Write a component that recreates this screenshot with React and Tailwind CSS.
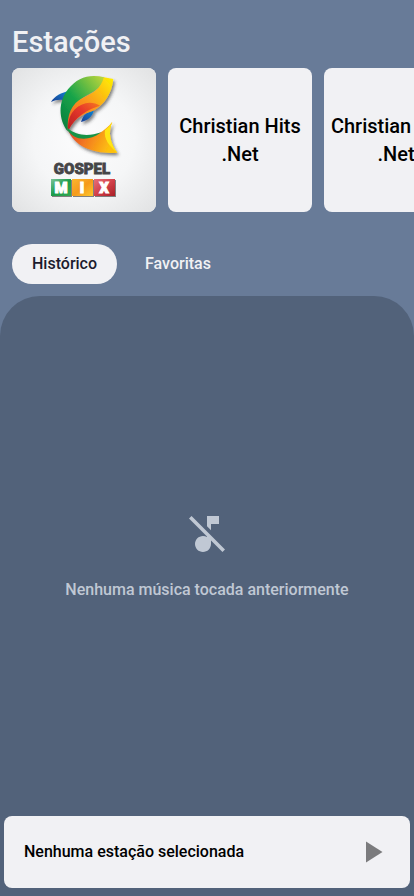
import { MdMusicOff, MdPlayArrow } from "react-icons/md";

function GospelMixLogo() {
  return (
    <svg viewBox="0 0 144 144" className="h-full w-full" role="img" aria-label="Gospel Mix">
      <defs>
        <radialGradient id="paper" cx=".5" cy=".5" r=".7">
          <stop offset="0" stopColor="#fcfcfd" />
          <stop offset=".5" stopColor="#f5f6f7" />
          <stop offset="1" stopColor="#e1e2e3" />
        </radialGradient>
        <linearGradient id="green" x1="0" y1="1" x2="1" y2="0">
          <stop offset="0" stopColor="#087a3d" />
          <stop offset=".45" stopColor="#17a44a" />
          <stop offset="1" stopColor="#c4d83a" />
        </linearGradient>
        <linearGradient id="gold" x1="0" y1="1" x2="1" y2="0">
          <stop offset="0" stopColor="#ef5a23" />
          <stop offset=".5" stopColor="#fa9a1e" />
          <stop offset="1" stopColor="#fff200" />
        </linearGradient>
        <linearGradient id="red" x1="0" y1="1" x2="1" y2="0">
          <stop offset="0" stopColor="#b51d22" />
          <stop offset=".6" stopColor="#e8392b" />
          <stop offset="1" stopColor="#f47a20" />
        </linearGradient>
        <linearGradient id="blue" x1="0" y1="1" x2="1" y2="0">
          <stop offset="0" stopColor="#1b3f94" />
          <stop offset="1" stopColor="#0d86d3" />
        </linearGradient>
        <linearGradient id="tail" x1="0" y1="0" x2="1" y2=".3">
          <stop offset="0" stopColor="#d8342a" />
          <stop offset=".5" stopColor="#f37a20" />
          <stop offset="1" stopColor="#fdc010" />
        </linearGradient>
        <linearGradient id="tileGreen" x1="0" y1="0" x2="1" y2="1">
          <stop offset="0" stopColor="#7cc49a" />
          <stop offset=".5" stopColor="#1c9c4b" />
          <stop offset="1" stopColor="#35a852" />
        </linearGradient>
        <linearGradient id="tileGold" x1="0" y1="0" x2="1" y2="1">
          <stop offset="0" stopColor="#fbb62f" />
          <stop offset=".5" stopColor="#f59a1d" />
          <stop offset="1" stopColor="#fdc72c" />
        </linearGradient>
        <linearGradient id="tileRed" x1="0" y1="0" x2="1" y2="1">
          <stop offset="0" stopColor="#e8707a" />
          <stop offset=".5" stopColor="#d2414a" />
          <stop offset="1" stopColor="#a91f26" />
        </linearGradient>
        <filter id="shade" x="-20%" y="-20%" width="150%" height="150%">
          <feDropShadow dx="5" dy="7" stdDeviation="5" floodColor="#333" floodOpacity=".6" />
        </filter>
        <filter id="tileShade" x="-10%" y="-10%" width="130%" height="140%">
          <feDropShadow dx="1" dy="1" stdDeviation=".7" floodColor="#333" floodOpacity=".6" />
        </filter>
      </defs>
      <rect width="144" height="144" fill="url(#paper)" />
      <g transform="translate(28 -2) scale(.3333)" filter="url(#shade)">
        <path fill="url(#blue)" d="M33 108C44 90 63 79 90 75L68 102C56 100 45 103 33 108Z" />
        <path fill="url(#blue)" d="M123 168C126 157 132 147 140 142L162 133C157 151 145 164 123 168Z" />
        <path fill="url(#green)" d="M83 196C55 160 54 108 84 70C113 33 150 23 193 34C182 75 151 78 121 101C92 123 86 154 83 196Z" />
        <path fill="url(#gold)" d="M192 34L220 39C216 82 193 117 160 134C125 145 98 160 84 196C79 145 96 112 128 96C161 80 181 70 192 34Z" />
        <path fill="url(#red)" d="M84 196C81 150 102 122 137 112C151 108 169 112 180 119C146 130 106 148 84 196Z" />
        <path fill="url(#tail)" d="M83 190C112 228 176 220 217 167C203 200 211 232 232 260C169 265 105 247 83 190Z" />
        <path fill="#ffe512" d="M217 167C203 200 211 232 232 260C207 240 191 219 195 192C204 185 211 176 217 167Z" />
        <path fill="#159447" d="M83 186C110 211 148 211 184 199C143 229 102 222 83 193Z" />
      </g>
      <text x="70" y="106" textAnchor="middle" className="font-['Roboto'] text-[15px] font-black" fill="#454547" stroke="#454547" strokeWidth=".8">GOSPEL</text>
      <g filter="url(#tileShade)">
        <rect x="39" y="111" width="20" height="17" fill="url(#tileGreen)" />
        <rect x="60" y="111" width="21" height="17" fill="url(#tileGold)" />
        <rect x="82" y="111" width="21" height="17" fill="url(#tileRed)" />
      </g>
      <g fill="#fff" stroke="#fff" strokeWidth="1" textAnchor="middle" className="font-['Roboto'] text-[15px] font-black">
        <text x="49" y="125">M</text>
        <text x="70" y="125">I</text>
        <text x="92" y="125">X</text>
      </g>
    </svg>
  );
}

const stations = [
  { id: "gospel-mix", logo: true },
  { id: "christian-hits", name: "Christian Hits .Net" },
  { id: "christian-rock", name: "Christian Rock .Net" },
];

export default function App() {
  return (
    <div className="flex min-h-screen flex-col overflow-hidden bg-[#687b98] font-[Roboto,sans-serif] font-medium">
      <header className="px-3 pt-6">
        <h1 className="text-[29px] leading-9 font-medium text-[#f1f1f4]">Estações</h1>
      </header>
      <div className="mt-2 flex gap-3 overflow-x-auto pl-3 [scrollbar-width:none]">
        {stations.map((s) => (
          <button key={s.id} type="button" className="size-36 shrink-0 overflow-hidden rounded-lg bg-[#f1f1f4] text-center text-xl leading-7 text-black">
            {s.logo ? <GospelMixLogo /> : <span className="block px-1">{s.name}</span>}
          </button>
        ))}
      </div>
      <nav className="mt-8 flex gap-2 px-3">
        <button type="button" className="h-10 rounded-full bg-[#f1f1f4] px-5 text-base text-[#1c1b2e]">Histórico</button>
        <button type="button" className="h-10 rounded-full px-5 text-base text-[#f1f1f4]">Favoritas</button>
      </nav>
      <main className="mt-3 flex grow flex-col rounded-t-[40px] bg-[#52627a]">
        <section className="flex grow flex-col items-center justify-center gap-5 text-[#c0c8d4]">
          <MdMusicOff className="size-12" />
          <p className="text-base leading-6">Nenhuma música tocada anteriormente</p>
        </section>
        <footer className="mx-1 mb-2 flex h-18 items-center justify-between rounded-lg bg-[#f1f1f4] px-5 text-base text-black">
          <p>Nenhuma estação selecionada</p>
          <button type="button" aria-label="Reproduzir" className="text-[#7b7b7d]">
            <MdPlayArrow className="size-9" />
          </button>
        </footer>
      </main>
    </div>
  );
}
